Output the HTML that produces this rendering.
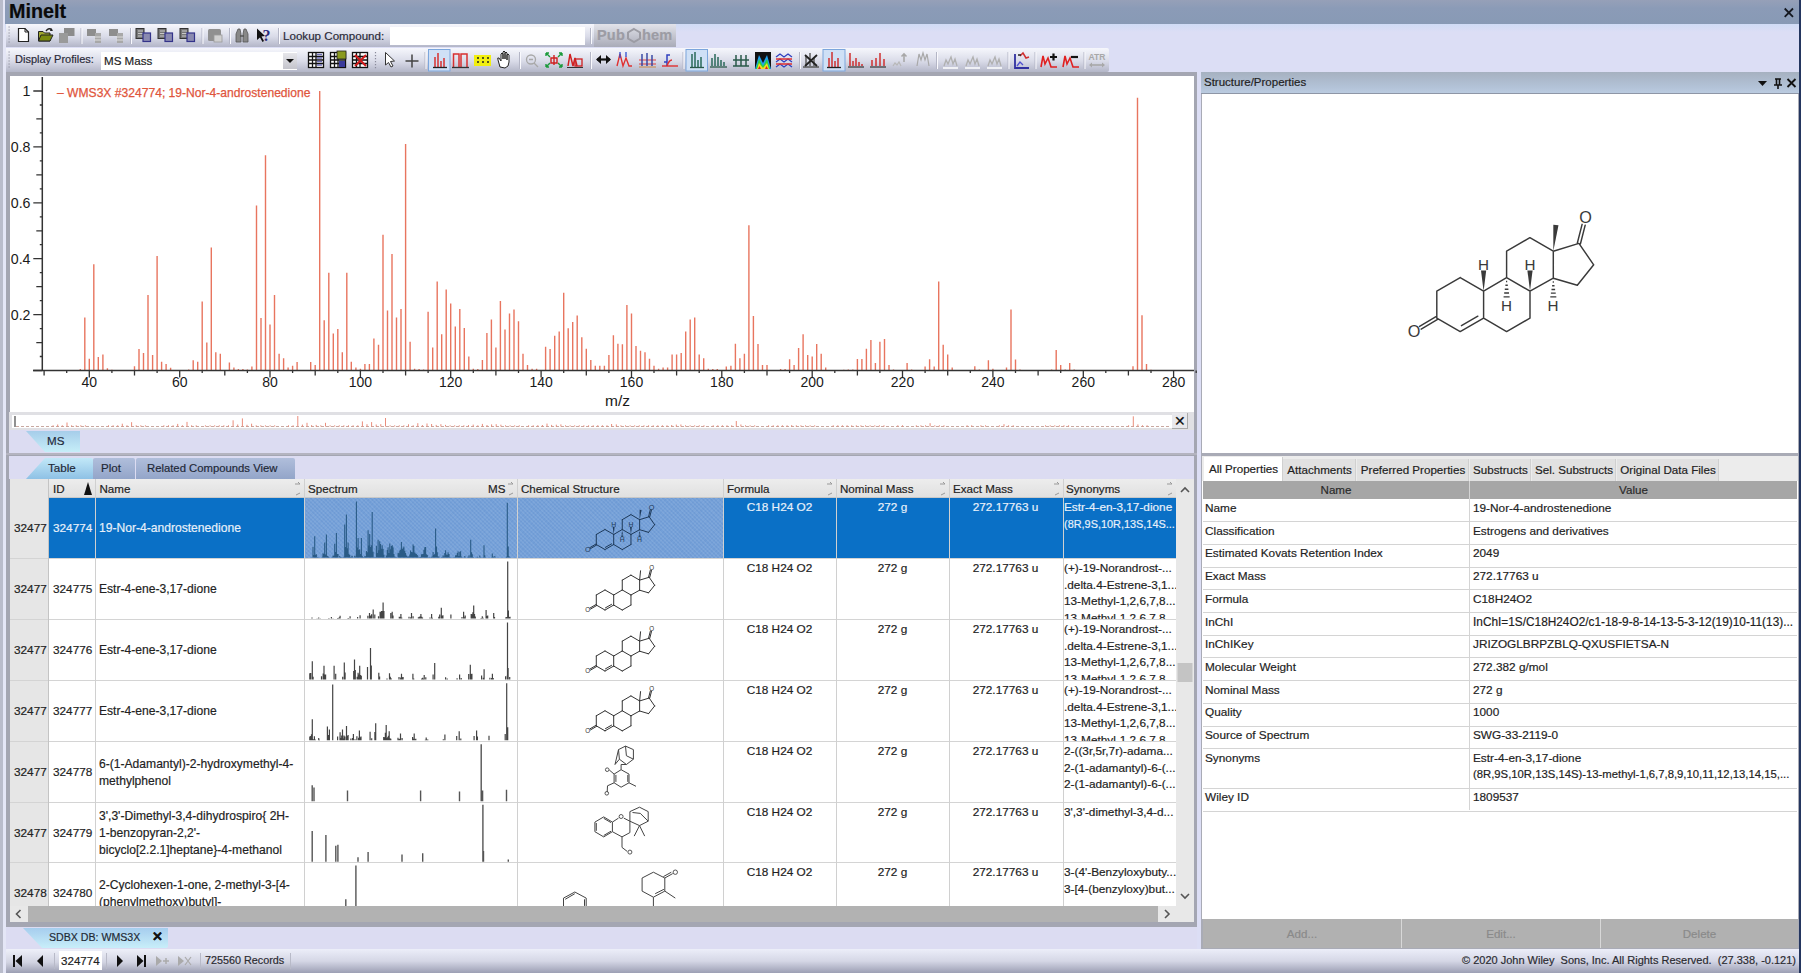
<!DOCTYPE html><html><head><meta charset="utf-8"><title>MineIt</title><style>
*{margin:0;padding:0;box-sizing:border-box}
html,body{width:1801px;height:973px;overflow:hidden}
body{position:relative;background:#dcdef5;font-family:"Liberation Sans",sans-serif;font-size:12px;color:#222}
.a{position:absolute}
.t{position:absolute;white-space:nowrap;line-height:1;-webkit-text-stroke:0.18px currentColor}
</style></head><body>
<div class="a" style="left:0;top:0;width:3px;height:973px;background:#b9bccb"></div>
<div class="a" style="left:3px;top:0;width:3px;height:973px;background:#e4e6f6"></div><div class="a" style="left:5px;top:24px;width:1796px;height:8px;background:linear-gradient(#d0dcf6,#dcdef5)"></div>
<div class="a" style="left:5px;top:0;width:1796px;height:24px;background:linear-gradient(#96a0b8,#8b9bb7 35%,#889ab5)"></div>
<div class="t" style="left:9px;top:2px;font-size:19.8px;font-weight:bold;color:#0a0a0a">MineIt</div>
<svg class="a" style="left:1780px;top:4px" width="18" height="18"><path d="M4.7 4.5L13 12.8M13 4.5L4.7 12.8" stroke="#151820" stroke-width="1.8"/></svg>
<div class="a" style="left:1799px;top:0px;width:2px;height:973px;background:#24365f"></div>
<div class="a" style="left:6px;top:24px;width:670px;height:23px;background:linear-gradient(#f6f7fc,#d9dbe8 55%,#b3b6c8);border-radius:0 2px 2px 0"></div>
<div class="a" style="left:6px;top:48px;width:1103px;height:24px;background:linear-gradient(#f6f7fc,#d9dbe8 55%,#b3b6c8);border-radius:0 2px 2px 0"></div>
<div class="t" style="left:283px;top:30px;font-size:11.6px;color:#2a2a38">Lookup Compound:</div>
<div class="a" style="left:390px;top:27px;width:195px;height:18px;background:#fff"></div>
<div class="a" style="left:594px;top:24px;width:82px;height:23px;background:linear-gradient(#e2e3ea,#a9abb8)"></div>
<div class="t" style="left:597px;top:28px;font-size:14.5px;font-weight:bold;color:#9c9ca4;letter-spacing:0.2px">Pub&#160;&#160;&#160;&#160;hem</div><svg class="a" style="left:626px;top:27px" width="16" height="17"><path d="M8 2L14 5.5V11.5L8 15L2 11.5V5.5Z" fill="none" stroke="#9c9ca4" stroke-width="2"/></svg>
<div class="t" style="left:15px;top:54px;font-size:11px;color:#2a2a38">Display Profiles:</div>
<div class="a" style="left:101px;top:52px;width:196px;height:18px;background:#fff"></div>
<div class="t" style="left:104px;top:55px;font-size:11.6px;color:#222">MS Mass</div>
<div class="a" style="left:283px;top:53px;width:14px;height:16px;background:linear-gradient(#e6e6ea,#c4c4cc)"></div>
<div class="a" style="left:286px;top:59px;width:0;height:0;border-left:4px solid transparent;border-right:4px solid transparent;border-top:4px solid #111"></div>
<div class="a" style="left:6px;top:72px;width:1191px;height:359px;background:#a4a6b2"></div>
<div class="a" style="left:10px;top:76px;width:1184px;height:336px;background:#fff"></div>
<div class="a" style="left:9px;top:412px;width:1185px;height:18px;background:#e0e0e4"></div>
<div class="a" style="left:12px;top:415px;width:1160px;height:13px;background:#fff"></div>
<svg class="a" style="left:0;top:0" width="1200" height="440"><path d="M80.3 370.5V369.1M84.8 370.5V317.4M89.3 370.5V358.8M93.8 370.5V264.3M98.3 370.5V357.1M102.9 370.5V354.6M107.4 370.5V368.3M111.9 370.5V369.7M134.5 370.5V366.3M139.0 370.5V349.0M143.5 370.5V352.9M148.0 370.5V295.0M152.6 370.5V355.1M157.1 370.5V255.9M161.6 370.5V361.8M166.1 370.5V364.1M170.6 370.5V367.7M188.7 370.5V369.4M193.2 370.5V360.2M197.7 370.5V361.8M202.2 370.5V301.5M206.8 370.5V342.6M211.3 370.5V247.5M215.8 370.5V352.3M220.3 370.5V353.7M229.4 370.5V362.4M233.9 370.5V367.4M238.4 370.5V369.1M242.9 370.5V369.1M247.4 370.5V369.4M251.9 370.5V366.6M256.5 370.5V205.6M261.0 370.5V318.0M265.5 370.5V155.3M270.0 370.5V324.4M274.5 370.5V295.0M279.1 370.5V353.7M283.6 370.5V358.2M288.1 370.5V367.4M292.6 370.5V365.7M297.1 370.5V362.1M310.7 370.5V362.1M315.2 370.5V364.9M319.7 370.5V91.0M324.2 370.5V320.2M328.8 370.5V272.7M333.3 370.5V333.6M337.8 370.5V328.9M342.3 370.5V352.3M346.8 370.5V272.7M351.3 370.5V361.8M355.9 370.5V367.4M360.4 370.5V368.8M364.9 370.5V364.1M369.4 370.5V364.1M373.9 370.5V338.4M378.5 370.5V344.8M383.0 370.5V234.7M387.5 370.5V310.4M392.0 370.5V253.9M396.5 370.5V317.4M401.0 370.5V309.0M405.6 370.5V144.1M410.1 370.5V341.7M414.6 370.5V368.8M419.1 370.5V369.1M423.6 370.5V369.4M428.1 370.5V311.8M432.7 370.5V347.6M437.2 370.5V281.6M441.7 370.5V334.2M446.2 370.5V289.4M450.7 370.5V303.4M455.3 370.5V326.6M459.8 370.5V309.0M464.3 370.5V328.0M468.8 370.5V356.5M473.3 370.5V368.8M477.8 370.5V369.1M482.4 370.5V359.9M486.9 370.5V333.0M491.4 370.5V319.4M495.9 370.5V347.6M500.4 370.5V300.9M505.0 370.5V329.4M509.5 370.5V313.5M514.0 370.5V309.6M518.5 370.5V321.3M523.0 370.5V353.7M527.5 370.5V364.9M532.1 370.5V368.8M536.6 370.5V368.8M545.6 370.5V346.7M550.1 370.5V349.0M554.7 370.5V335.8M559.2 370.5V331.4M563.7 370.5V292.8M568.2 370.5V328.3M572.7 370.5V321.9M577.2 370.5V315.4M581.8 370.5V337.2M586.3 370.5V348.7M590.8 370.5V359.9M595.3 370.5V365.7M599.8 370.5V365.7M604.4 370.5V365.7M608.9 370.5V355.1M613.4 370.5V335.3M617.9 370.5V343.7M622.4 370.5V344.2M626.9 370.5V305.1M631.5 370.5V313.5M636.0 370.5V345.9M640.5 370.5V350.7M645.0 370.5V352.3M649.5 370.5V358.8M654.0 370.5V365.7M658.6 370.5V368.8M663.1 370.5V367.4M667.6 370.5V367.4M672.1 370.5V354.6M676.6 370.5V354.6M681.2 370.5V352.9M685.7 370.5V331.4M690.2 370.5V319.4M694.7 370.5V317.4M699.2 370.5V354.6M703.7 370.5V358.2M708.3 370.5V368.8M712.8 370.5V369.1M717.3 370.5V369.1M726.3 370.5V366.6M730.9 370.5V365.7M735.4 370.5V343.7M739.9 370.5V358.2M744.4 370.5V353.7M748.9 370.5V225.2M753.4 370.5V316.0M758.0 370.5V343.9M762.5 370.5V364.9M767.0 370.5V364.9M780.6 370.5V369.1M785.1 370.5V369.1M789.6 370.5V359.3M794.1 370.5V364.9M798.6 370.5V348.1M803.1 370.5V334.2M807.7 370.5V355.1M812.2 370.5V356.5M816.7 370.5V343.9M821.2 370.5V353.7M825.7 370.5V367.4M843.8 370.5V369.7M848.3 370.5V369.4M852.8 370.5V369.4M857.4 370.5V359.0M861.9 370.5V359.0M866.4 370.5V348.7M870.9 370.5V340.0M875.4 370.5V363.0M879.9 370.5V341.7M884.5 370.5V338.9M889.0 370.5V364.9M893.5 370.5V369.4M907.1 370.5V363.0M911.6 370.5V369.4M925.1 370.5V366.6M929.6 370.5V359.3M934.2 370.5V366.6M938.7 370.5V281.6M943.2 370.5V344.8M947.7 370.5V354.6M952.2 370.5V367.4M974.8 370.5V366.3M979.3 370.5V369.4M988.4 370.5V360.2M992.9 370.5V368.8M1006.5 370.5V367.4M1011.0 370.5V309.6M1015.5 370.5V359.6M1020.0 370.5V369.4M1051.6 370.5V369.4M1056.2 370.5V350.1M1060.7 370.5V364.9M1065.2 370.5V369.4M1069.7 370.5V363.0M1074.2 370.5V369.4M1133.0 370.5V366.3M1137.5 370.5V97.7M1142.0 370.5V315.2M1146.5 370.5V364.1M1151.0 370.5V369.7" stroke="#e8755f" stroke-width="1.4" fill="none"/><path d="M42.3 77V370.5M33 370.5H1194" stroke="#333" stroke-width="1.5" fill="none"/><path d="M33.3 370.5H42.3M39.8 356.5H42.3M36.3 342.6H42.3M39.8 328.6H42.3M33.3 314.6H42.3M39.8 300.6H42.3M36.3 286.6H42.3M39.8 272.7H42.3M33.3 258.7H42.3M39.8 244.7H42.3M36.3 230.8H42.3M39.8 216.8H42.3M33.3 202.8H42.3M39.8 188.8H42.3M36.3 174.8H42.3M39.8 160.9H42.3M33.3 146.9H42.3M39.8 132.9H42.3M36.3 118.9H42.3M39.8 105.0H42.3M33.3 91.0H42.3M44.1 370.5V375.5M66.7 370.5V373.0M89.3 370.5V377.5M111.9 370.5V373.0M134.5 370.5V375.5M157.1 370.5V373.0M179.7 370.5V377.5M202.2 370.5V373.0M224.8 370.5V375.5M247.4 370.5V373.0M270.0 370.5V377.5M292.6 370.5V373.0M315.2 370.5V375.5M337.8 370.5V373.0M360.4 370.5V377.5M383.0 370.5V373.0M405.6 370.5V375.5M428.1 370.5V373.0M450.7 370.5V377.5M473.3 370.5V373.0M495.9 370.5V375.5M518.5 370.5V373.0M541.1 370.5V377.5M563.7 370.5V373.0M586.3 370.5V375.5M608.9 370.5V373.0M631.5 370.5V377.5M654.0 370.5V373.0M676.6 370.5V375.5M699.2 370.5V373.0M721.8 370.5V377.5M744.4 370.5V373.0M767.0 370.5V375.5M789.6 370.5V373.0M812.2 370.5V377.5M834.8 370.5V373.0M857.4 370.5V375.5M879.9 370.5V373.0M902.5 370.5V377.5M925.1 370.5V373.0M947.7 370.5V375.5M970.3 370.5V373.0M992.9 370.5V377.5M1015.5 370.5V373.0M1038.1 370.5V375.5M1060.7 370.5V373.0M1083.3 370.5V377.5M1105.8 370.5V373.0M1128.4 370.5V375.5M1151.0 370.5V373.0M1173.6 370.5V377.5M1196.2 370.5V373.0" stroke="#333" stroke-width="1.3" fill="none"/><text x="30.5" y="96.2" text-anchor="end" font-size="14.2" fill="#1a1a1a" font-family="Liberation Sans">1</text><text x="30.5" y="152.1" text-anchor="end" font-size="14.2" fill="#1a1a1a" font-family="Liberation Sans">0.8</text><text x="30.5" y="208.0" text-anchor="end" font-size="14.2" fill="#1a1a1a" font-family="Liberation Sans">0.6</text><text x="30.5" y="263.9" text-anchor="end" font-size="14.2" fill="#1a1a1a" font-family="Liberation Sans">0.4</text><text x="30.5" y="319.8" text-anchor="end" font-size="14.2" fill="#1a1a1a" font-family="Liberation Sans">0.2</text><text x="89.3" y="387.3" text-anchor="middle" font-size="14" fill="#1a1a1a" font-family="Liberation Sans">40</text><text x="179.7" y="387.3" text-anchor="middle" font-size="14" fill="#1a1a1a" font-family="Liberation Sans">60</text><text x="270.0" y="387.3" text-anchor="middle" font-size="14" fill="#1a1a1a" font-family="Liberation Sans">80</text><text x="360.4" y="387.3" text-anchor="middle" font-size="14" fill="#1a1a1a" font-family="Liberation Sans">100</text><text x="450.7" y="387.3" text-anchor="middle" font-size="14" fill="#1a1a1a" font-family="Liberation Sans">120</text><text x="541.1" y="387.3" text-anchor="middle" font-size="14" fill="#1a1a1a" font-family="Liberation Sans">140</text><text x="631.5" y="387.3" text-anchor="middle" font-size="14" fill="#1a1a1a" font-family="Liberation Sans">160</text><text x="721.8" y="387.3" text-anchor="middle" font-size="14" fill="#1a1a1a" font-family="Liberation Sans">180</text><text x="812.2" y="387.3" text-anchor="middle" font-size="14" fill="#1a1a1a" font-family="Liberation Sans">200</text><text x="902.5" y="387.3" text-anchor="middle" font-size="14" fill="#1a1a1a" font-family="Liberation Sans">220</text><text x="992.9" y="387.3" text-anchor="middle" font-size="14" fill="#1a1a1a" font-family="Liberation Sans">240</text><text x="1083.3" y="387.3" text-anchor="middle" font-size="14" fill="#1a1a1a" font-family="Liberation Sans">260</text><text x="1173.6" y="387.3" text-anchor="middle" font-size="14" fill="#1a1a1a" font-family="Liberation Sans">280</text><text x="617.5" y="405.5" text-anchor="middle" font-size="15.5" fill="#1a1a1a" font-family="Liberation Sans">m/z</text><text x="57" y="97" font-size="12.1" fill="#e0553c" stroke="#e0553c" stroke-width="0.25" font-family="Liberation Sans">– WMS3X #324774; 19-Nor-4-androstenedione</text><path d="M16 426.5H1170" stroke="#c8a8a0" stroke-width="1" stroke-dasharray="3 2" fill="none"/><path d="M15 416V427" stroke="#555" stroke-width="1.3"/><path d="M53.1 426.5V425.3M57.7 426.5V424.5M62.3 426.5V425.3M67.0 426.5V422.5M71.6 426.5V425.3M76.2 426.5V425.3M80.8 426.5V425.3M85.4 426.5V425.3M108.5 426.5V425.3M113.1 426.5V425.3M117.7 426.5V425.3M122.3 426.5V423.7M127.0 426.5V425.3M131.6 426.5V422.2M136.2 426.5V425.3M140.8 426.5V425.3M145.4 426.5V425.3M163.9 426.5V425.3M168.5 426.5V425.3M173.1 426.5V425.3M177.7 426.5V423.9M182.4 426.5V425.3M187.0 426.5V421.9M191.6 426.5V425.3M196.2 426.5V425.3M205.4 426.5V425.3M210.1 426.5V425.3M214.7 426.5V425.3M219.3 426.5V425.3M223.9 426.5V425.3M228.5 426.5V425.3M233.1 426.5V420.3M237.7 426.5V424.5M242.4 426.5V418.4M247.0 426.5V424.8M251.6 426.5V423.7M256.2 426.5V425.3M260.8 426.5V425.3M265.4 426.5V425.3M270.1 426.5V425.3M274.7 426.5V425.3M288.5 426.5V425.3M293.1 426.5V425.3M297.8 426.5V416.0M302.4 426.5V424.6M307.0 426.5V422.8M311.6 426.5V425.1M316.2 426.5V424.9M320.8 426.5V425.3M325.5 426.5V422.8M330.1 426.5V425.3M334.7 426.5V425.3M339.3 426.5V425.3M343.9 426.5V425.3M348.5 426.5V425.3M353.1 426.5V425.3M357.8 426.5V425.3M362.4 426.5V421.4M367.0 426.5V424.2M371.6 426.5V422.1M376.2 426.5V424.5M380.8 426.5V424.2M385.5 426.5V418.0M390.1 426.5V425.3M394.7 426.5V425.3M399.3 426.5V425.3M403.9 426.5V425.3M408.5 426.5V424.3M413.2 426.5V425.3M417.8 426.5V423.2M422.4 426.5V425.1M427.0 426.5V423.5M431.6 426.5V424.0M436.2 426.5V424.9M440.9 426.5V424.2M445.5 426.5V424.9M450.1 426.5V425.3M454.7 426.5V425.3M459.3 426.5V425.3M463.9 426.5V425.3M468.5 426.5V425.1M473.2 426.5V424.6M477.8 426.5V425.3M482.4 426.5V423.9M487.0 426.5V425.0M491.6 426.5V424.4M496.2 426.5V424.2M500.9 426.5V424.7M505.5 426.5V425.3M510.1 426.5V425.3M514.7 426.5V425.3M519.3 426.5V425.3M528.6 426.5V425.3M533.2 426.5V425.3M537.8 426.5V425.2M542.4 426.5V425.0M547.0 426.5V423.6M551.6 426.5V424.9M556.3 426.5V424.7M560.9 426.5V424.4M565.5 426.5V425.3M570.1 426.5V425.3M574.7 426.5V425.3M579.3 426.5V425.3M583.9 426.5V425.3M588.6 426.5V425.3M593.2 426.5V425.3M597.8 426.5V425.2M602.4 426.5V425.3M607.0 426.5V425.3M611.6 426.5V424.0M616.3 426.5V424.4M620.9 426.5V425.3M625.5 426.5V425.3M630.1 426.5V425.3M634.7 426.5V425.3M639.3 426.5V425.3M644.0 426.5V425.3M648.6 426.5V425.3M653.2 426.5V425.3M657.8 426.5V425.3M662.4 426.5V425.3M667.0 426.5V425.3M671.7 426.5V425.0M676.3 426.5V424.6M680.9 426.5V424.5M685.5 426.5V425.3M690.1 426.5V425.3M694.7 426.5V425.3M699.3 426.5V425.3M704.0 426.5V425.3M713.2 426.5V425.3M717.8 426.5V425.3M722.4 426.5V425.3M727.0 426.5V425.3M731.7 426.5V425.3M736.3 426.5V421.0M740.9 426.5V424.5M745.5 426.5V425.3M750.1 426.5V425.3M754.7 426.5V425.3M768.6 426.5V425.3M773.2 426.5V425.3M777.8 426.5V425.3M782.4 426.5V425.3M787.1 426.5V425.3M791.7 426.5V425.1M796.3 426.5V425.3M800.9 426.5V425.3M805.5 426.5V425.3M810.1 426.5V425.3M814.7 426.5V425.3M833.2 426.5V425.3M837.8 426.5V425.3M842.4 426.5V425.3M847.1 426.5V425.3M851.7 426.5V425.3M856.3 426.5V425.3M860.9 426.5V425.3M865.5 426.5V425.3M870.1 426.5V425.3M874.8 426.5V425.3M879.4 426.5V425.3M884.0 426.5V425.3M897.8 426.5V425.3M902.5 426.5V425.3M916.3 426.5V425.3M920.9 426.5V425.3M925.5 426.5V425.3M930.1 426.5V423.2M934.8 426.5V425.3M939.4 426.5V425.3M944.0 426.5V425.3M967.1 426.5V425.3M971.7 426.5V425.3M980.9 426.5V425.3M985.5 426.5V425.3M999.4 426.5V425.3M1004.0 426.5V424.2M1008.6 426.5V425.3M1013.2 426.5V425.3M1045.5 426.5V425.3M1050.2 426.5V425.3M1054.8 426.5V425.3M1059.4 426.5V425.3M1064.0 426.5V425.3M1068.6 426.5V425.3M1128.6 426.5V425.3M1133.3 426.5V416.3M1137.9 426.5V424.4M1142.5 426.5V425.3M1147.1 426.5V425.3" stroke="#e8806c" stroke-width="0.9" fill="none"/></svg>
<div class="a" style="left:1172px;top:413px;width:16px;height:16px;background:#e8e8ec;border-right:1px solid #aaa;border-bottom:1px solid #aaa"></div>
<div class="t" style="left:1174px;top:414px;font-size:14px;color:#111">&#x2715;</div>
<div class="a" style="left:6px;top:430px;width:1191px;height:24px;background:#dcdcf2;border-left:3px solid #a4a6b2;border-right:3px solid #a4a6b2"></div>
<div class="a" style="left:26px;top:431px;width:54px;height:21px;background:linear-gradient(#a6cdea,#c6eef8);clip-path:polygon(0 0,100% 0,100% 100%,19px 100%)"></div>
<div class="t" style="left:47px;top:435px;font-size:11.6px;color:#1e2a3a">MS</div>
<div class="a" style="left:6px;top:453px;width:1191px;height:2px;background:#b4b4c0"></div>
<div class="a" style="left:6px;top:455px;width:1191px;height:472px;background:#a4a6b2"></div>
<div class="a" style="left:9px;top:456px;width:1185px;height:23px;background:#dcdcf2"></div>
<div class="a" style="left:26px;top:458px;width:67px;height:21px;background:linear-gradient(#c2e8f8,#8ec1e5);clip-path:polygon(19px 0,100% 0,100% 100%,0 100%);border-radius:2px 2px 0 0"></div>
<div class="a" style="left:93px;top:458px;width:42px;height:21px;background:linear-gradient(#b0bedb,#93a5c9);border-radius:2px 2px 0 0"></div>
<div class="a" style="left:136px;top:458px;width:159px;height:21px;background:linear-gradient(#b0bedb,#93a5c9);border-radius:2px 2px 0 0"></div>
<div class="t" style="left:48px;top:462px;font-size:11.6px;color:#1e2836">Table</div>
<div class="t" style="left:101px;top:462px;font-size:11.6px;color:#1e2836">Plot</div>
<div class="t" style="left:147px;top:462.5px;font-size:11.3px;color:#1e2836">Related Compounds View</div>
<div class="a" style="left:10px;top:479px;width:1184px;height:443px;background:#fff"></div>
<div class="a" style="left:10px;top:479px;width:1166px;height:19px;background:linear-gradient(#ededed,#e0e0e0);border-bottom:1px solid #c8c8c8"></div>
<div class="t" style="left:53px;top:483px;font-size:11.6px;color:#222">ID</div>
<div class="t" style="left:99.5px;top:483px;font-size:11.6px;color:#222">Name</div>
<div class="t" style="left:308px;top:483px;font-size:11.6px;color:#222">Spectrum</div>
<div class="t" style="left:521px;top:483px;font-size:11.6px;color:#222">Chemical Structure</div>
<div class="t" style="left:727px;top:483px;font-size:11.6px;color:#222">Formula</div>
<div class="t" style="left:840px;top:483px;font-size:11.6px;color:#222">Nominal Mass</div>
<div class="t" style="left:953px;top:483px;font-size:11.6px;color:#222">Exact Mass</div>
<div class="t" style="left:1066px;top:483px;font-size:11.6px;color:#222">Synonyms</div>
<div class="t" style="left:488px;top:483px;font-size:11.6px;color:#222">MS</div>
<div class="a" style="left:84px;top:482px;width:0;height:0;border-left:4px solid transparent;border-right:4px solid transparent;border-bottom:13px solid #111"></div>
<svg class="a" style="left:294px;top:481px" width="8" height="15"><path d="M1 3H6L4 1M6 12L2 14" stroke="#999" stroke-width="1" fill="none"/></svg>
<svg class="a" style="left:507px;top:481px" width="8" height="15"><path d="M1 3H6L4 1M6 12L2 14" stroke="#999" stroke-width="1" fill="none"/></svg>
<svg class="a" style="left:826px;top:481px" width="8" height="15"><path d="M1 3H6L4 1M6 12L2 14" stroke="#999" stroke-width="1" fill="none"/></svg>
<svg class="a" style="left:939px;top:481px" width="8" height="15"><path d="M1 3H6L4 1M6 12L2 14" stroke="#999" stroke-width="1" fill="none"/></svg>
<svg class="a" style="left:1053px;top:481px" width="8" height="15"><path d="M1 3H6L4 1M6 12L2 14" stroke="#999" stroke-width="1" fill="none"/></svg>
<svg class="a" style="left:1166px;top:481px" width="8" height="15"><path d="M1 3H6L4 1M6 12L2 14" stroke="#999" stroke-width="1" fill="none"/></svg>
<div class="a" style="left:10px;top:479px;width:38px;height:428px;background:#e6e6e6"></div>
<div class="a" style="left:48px;top:498px;width:256px;height:60px;background:#0a70c6"></div>
<div class="a" style="left:517px;top:498px;width:0px;height:60px;"></div>
<div class="a" style="left:723px;top:498px;width:453px;height:60px;background:#0a70c6"></div>
<div class="a" style="left:304px;top:498px;width:419px;height:60px;background-color:#74a0d8;background-image:repeating-linear-gradient(45deg,rgba(255,255,255,0.07) 0 1.5px,transparent 1.5px 3px),repeating-linear-gradient(-45deg,rgba(40,80,160,0.06) 0 1.5px,transparent 1.5px 3px)"></div>
<div class="a" style="left:10px;top:558px;width:1166px;height:1px;background:#d4d4d4"></div><div class="a" style="left:10px;top:619px;width:1166px;height:1px;background:#d4d4d4"></div><div class="a" style="left:10px;top:680px;width:1166px;height:1px;background:#d4d4d4"></div><div class="a" style="left:10px;top:741px;width:1166px;height:1px;background:#d4d4d4"></div><div class="a" style="left:10px;top:802px;width:1166px;height:1px;background:#d4d4d4"></div><div class="a" style="left:10px;top:862px;width:1166px;height:1px;background:#d4d4d4"></div>
<div class="a" style="left:48px;top:479px;width:1px;height:428px;background:#d0d0d0"></div>
<div class="a" style="left:95px;top:479px;width:1px;height:428px;background:#d0d0d0"></div>
<div class="a" style="left:304px;top:479px;width:1px;height:428px;background:#d0d0d0"></div>
<div class="a" style="left:517px;top:479px;width:1px;height:428px;background:#d0d0d0"></div>
<div class="a" style="left:723px;top:479px;width:1px;height:428px;background:#d0d0d0"></div>
<div class="a" style="left:836px;top:479px;width:1px;height:428px;background:#d0d0d0"></div>
<div class="a" style="left:949px;top:479px;width:1px;height:428px;background:#d0d0d0"></div>
<div class="a" style="left:1063px;top:479px;width:1px;height:428px;background:#d0d0d0"></div>
<div class="a" style="left:48px;top:479px;width:1px;height:428px;background:#c4c4c4"></div>
<div class="a" style="left:10px;top:498px;width:1166px;height:60px;overflow:hidden">
<div class="t" style="left:4px;top:25px;font-size:11.8px;color:#222;width:34px;overflow:hidden">32477</div>
<div class="t" style="left:43px;top:25px;font-size:11.8px;color:#e8f0fa">324774</div>
<div class="t" style="left:89px;top:24.0px;font-size:12.1px;color:#e8f0fa">19-Nor-4-androstenedione</div>
<div class="t" style="left:713px;top:4px;font-size:11.8px;color:#e8f0fa;width:113px;text-align:center">C18 H24 O2</div>
<div class="t" style="left:826px;top:4px;font-size:11.8px;color:#e8f0fa;width:113px;text-align:center">272 g</div>
<div class="t" style="left:939px;top:4px;font-size:11.8px;color:#e8f0fa;width:113px;text-align:center">272.17763 u</div>
<div class="t" style="left:1054px;top:4.0px;font-size:11.8px;color:#e8f0fa;width:112px;overflow:hidden">Estr-4-en-3,17-dione</div>
<div class="t" style="left:1054px;top:20.7px;font-size:10.9px;color:#e8f0fa;width:112px;overflow:hidden">(8R,9S,10R,13S,14S...</div>
</div>
<div class="a" style="left:10px;top:559px;width:1166px;height:60px;overflow:hidden">
<div class="t" style="left:4px;top:25px;font-size:11.8px;color:#222;width:34px;overflow:hidden">32477</div>
<div class="t" style="left:43px;top:25px;font-size:11.8px;color:#222">324775</div>
<div class="t" style="left:89px;top:24.0px;font-size:12.1px;color:#222">Estr-4-ene-3,17-dione</div>
<div class="t" style="left:713px;top:4px;font-size:11.8px;color:#222;width:113px;text-align:center">C18 H24 O2</div>
<div class="t" style="left:826px;top:4px;font-size:11.8px;color:#222;width:113px;text-align:center">272 g</div>
<div class="t" style="left:939px;top:4px;font-size:11.8px;color:#222;width:113px;text-align:center">272.17763 u</div>
<div class="t" style="left:1054px;top:4.0px;font-size:11.8px;color:#222;width:112px;overflow:hidden">(+)-19-Norandrost-...</div>
<div class="t" style="left:1054px;top:20.7px;font-size:11.8px;color:#222;width:112px;overflow:hidden">.delta.4-Estrene-3,1...</div>
<div class="t" style="left:1054px;top:37.4px;font-size:11.8px;color:#222;width:112px;overflow:hidden">13-Methyl-1,2,6,7,8...</div>
<div class="t" style="left:1054px;top:54.1px;font-size:11.8px;color:#222;width:112px;overflow:hidden">13-Methyl-1,2,6,7,8...</div>
</div>
<div class="a" style="left:10px;top:620px;width:1166px;height:60px;overflow:hidden">
<div class="t" style="left:4px;top:25px;font-size:11.8px;color:#222;width:34px;overflow:hidden">32477</div>
<div class="t" style="left:43px;top:25px;font-size:11.8px;color:#222">324776</div>
<div class="t" style="left:89px;top:24.0px;font-size:12.1px;color:#222">Estr-4-ene-3,17-dione</div>
<div class="t" style="left:713px;top:4px;font-size:11.8px;color:#222;width:113px;text-align:center">C18 H24 O2</div>
<div class="t" style="left:826px;top:4px;font-size:11.8px;color:#222;width:113px;text-align:center">272 g</div>
<div class="t" style="left:939px;top:4px;font-size:11.8px;color:#222;width:113px;text-align:center">272.17763 u</div>
<div class="t" style="left:1054px;top:4.0px;font-size:11.8px;color:#222;width:112px;overflow:hidden">(+)-19-Norandrost-...</div>
<div class="t" style="left:1054px;top:20.7px;font-size:11.8px;color:#222;width:112px;overflow:hidden">.delta.4-Estrene-3,1...</div>
<div class="t" style="left:1054px;top:37.4px;font-size:11.8px;color:#222;width:112px;overflow:hidden">13-Methyl-1,2,6,7,8...</div>
<div class="t" style="left:1054px;top:54.1px;font-size:11.8px;color:#222;width:112px;overflow:hidden">13-Methyl-1,2,6,7,8...</div>
</div>
<div class="a" style="left:10px;top:681px;width:1166px;height:60px;overflow:hidden">
<div class="t" style="left:4px;top:25px;font-size:11.8px;color:#222;width:34px;overflow:hidden">32477</div>
<div class="t" style="left:43px;top:25px;font-size:11.8px;color:#222">324777</div>
<div class="t" style="left:89px;top:24.0px;font-size:12.1px;color:#222">Estr-4-ene-3,17-dione</div>
<div class="t" style="left:713px;top:4px;font-size:11.8px;color:#222;width:113px;text-align:center">C18 H24 O2</div>
<div class="t" style="left:826px;top:4px;font-size:11.8px;color:#222;width:113px;text-align:center">272 g</div>
<div class="t" style="left:939px;top:4px;font-size:11.8px;color:#222;width:113px;text-align:center">272.17763 u</div>
<div class="t" style="left:1054px;top:4.0px;font-size:11.8px;color:#222;width:112px;overflow:hidden">(+)-19-Norandrost-...</div>
<div class="t" style="left:1054px;top:20.7px;font-size:11.8px;color:#222;width:112px;overflow:hidden">.delta.4-Estrene-3,1...</div>
<div class="t" style="left:1054px;top:37.4px;font-size:11.8px;color:#222;width:112px;overflow:hidden">13-Methyl-1,2,6,7,8...</div>
<div class="t" style="left:1054px;top:54.1px;font-size:11.8px;color:#222;width:112px;overflow:hidden">13-Methyl-1,2,6,7,8...</div>
</div>
<div class="a" style="left:10px;top:742px;width:1166px;height:60px;overflow:hidden">
<div class="t" style="left:4px;top:25px;font-size:11.8px;color:#222;width:34px;overflow:hidden">32477</div>
<div class="t" style="left:43px;top:25px;font-size:11.8px;color:#222">324778</div>
<div class="t" style="left:89px;top:15.5px;font-size:12.1px;color:#222">6-(1-Adamantyl)-2-hydroxymethyl-4-</div>
<div class="t" style="left:89px;top:32.5px;font-size:12.1px;color:#222">methylphenol</div>
<div class="t" style="left:713px;top:4px;font-size:11.8px;color:#222;width:113px;text-align:center">C18 H24 O2</div>
<div class="t" style="left:826px;top:4px;font-size:11.8px;color:#222;width:113px;text-align:center">272 g</div>
<div class="t" style="left:939px;top:4px;font-size:11.8px;color:#222;width:113px;text-align:center">272.17763 u</div>
<div class="t" style="left:1054px;top:4.0px;font-size:11.8px;color:#222;width:112px;overflow:hidden"> 2-((3r,5r,7r)-adama...</div>
<div class="t" style="left:1054px;top:20.7px;font-size:11.8px;color:#222;width:112px;overflow:hidden">2-(1-adamantyl)-6-(...</div>
<div class="t" style="left:1054px;top:37.4px;font-size:11.8px;color:#222;width:112px;overflow:hidden">2-(1-adamantyl)-6-(...</div>
</div>
<div class="a" style="left:10px;top:803px;width:1166px;height:60px;overflow:hidden">
<div class="t" style="left:4px;top:25px;font-size:11.8px;color:#222;width:34px;overflow:hidden">32477</div>
<div class="t" style="left:43px;top:25px;font-size:11.8px;color:#222">324779</div>
<div class="t" style="left:89px;top:7.0px;font-size:12.1px;color:#222">3',3'-Dimethyl-3,4-dihydrospiro{ 2H-</div>
<div class="t" style="left:89px;top:24.0px;font-size:12.1px;color:#222">1-benzopyran-2,2'-</div>
<div class="t" style="left:89px;top:41.0px;font-size:12.1px;color:#222">bicyclo[2.2.1]heptane}-4-methanol</div>
<div class="t" style="left:713px;top:4px;font-size:11.8px;color:#222;width:113px;text-align:center">C18 H24 O2</div>
<div class="t" style="left:826px;top:4px;font-size:11.8px;color:#222;width:113px;text-align:center">272 g</div>
<div class="t" style="left:939px;top:4px;font-size:11.8px;color:#222;width:113px;text-align:center">272.17763 u</div>
<div class="t" style="left:1054px;top:4.0px;font-size:11.8px;color:#222;width:112px;overflow:hidden">3',3'-dimethyl-3,4-d...</div>
</div>
<div class="a" style="left:10px;top:863px;width:1166px;height:43px;overflow:hidden">
<div class="t" style="left:4px;top:25px;font-size:11.8px;color:#222;width:34px;overflow:hidden">32478</div>
<div class="t" style="left:43px;top:25px;font-size:11.8px;color:#222">324780</div>
<div class="t" style="left:89px;top:15.5px;font-size:12.1px;color:#222">2-Cyclohexen-1-one, 2-methyl-3-[4-</div>
<div class="t" style="left:89px;top:32.5px;font-size:12.1px;color:#222">(phenylmethoxy)butyl]-</div>
<div class="t" style="left:713px;top:4px;font-size:11.8px;color:#222;width:113px;text-align:center">C18 H24 O2</div>
<div class="t" style="left:826px;top:4px;font-size:11.8px;color:#222;width:113px;text-align:center">272 g</div>
<div class="t" style="left:939px;top:4px;font-size:11.8px;color:#222;width:113px;text-align:center">272.17763 u</div>
<div class="t" style="left:1054px;top:4.0px;font-size:11.8px;color:#222;width:112px;overflow:hidden">3-(4'-Benzyloxybuty...</div>
<div class="t" style="left:1054px;top:20.7px;font-size:11.8px;color:#222;width:112px;overflow:hidden">3-[4-(benzyloxy)but...</div>
</div>
<svg class="a" style="left:0;top:0" width="1200" height="910"><defs><clipPath id="gc"><rect x="304" y="498" width="419" height="408"/></clipPath></defs><g clip-path="url(#gc)"><path d="M312.2 557.5V557.2M313.0 557.5V546.9M313.9 557.5V555.1M314.7 557.5V536.2M315.5 557.5V554.8M316.4 557.5V554.3M317.2 557.5V557.1M318.0 557.5V557.3M322.2 557.5V556.7M323.0 557.5V553.2M323.9 557.5V554.0M324.7 557.5V542.4M325.5 557.5V554.4M326.4 557.5V534.5M327.2 557.5V555.8M328.0 557.5V556.2M328.9 557.5V556.9M332.2 557.5V557.3M333.0 557.5V555.4M333.9 557.5V555.8M334.7 557.5V543.7M335.5 557.5V551.9M336.4 557.5V532.9M337.2 557.5V553.9M338.0 557.5V554.1M339.7 557.5V555.9M340.5 557.5V556.9M341.4 557.5V557.2M342.2 557.5V557.2M343.1 557.5V557.3M343.9 557.5V556.7M344.7 557.5V524.5M345.6 557.5V547.0M346.4 557.5V514.4M347.2 557.5V548.3M348.1 557.5V542.4M348.9 557.5V554.1M349.7 557.5V555.0M350.6 557.5V556.9M351.4 557.5V556.5M352.2 557.5V555.8M354.7 557.5V555.8M355.6 557.5V556.4M356.4 557.5V501.5M357.2 557.5V547.4M358.1 557.5V537.9M358.9 557.5V550.1M359.7 557.5V549.2M360.6 557.5V553.9M361.4 557.5V537.9M362.2 557.5V555.8M363.1 557.5V556.9M363.9 557.5V557.2M364.7 557.5V556.2M365.6 557.5V556.2M366.4 557.5V551.1M367.2 557.5V552.3M368.1 557.5V530.3M368.9 557.5V545.5M369.7 557.5V534.1M370.6 557.5V546.9M371.4 557.5V545.2M372.2 557.5V512.1M373.1 557.5V551.7M373.9 557.5V557.2M374.7 557.5V557.2M375.6 557.5V557.3M376.4 557.5V545.7M377.2 557.5V552.9M378.1 557.5V539.7M378.9 557.5V550.2M379.7 557.5V541.3M380.6 557.5V544.1M381.4 557.5V548.7M382.2 557.5V545.2M383.1 557.5V549.0M383.9 557.5V554.7M384.8 557.5V557.2M385.6 557.5V557.2M386.4 557.5V555.4M387.3 557.5V550.0M388.1 557.5V547.3M388.9 557.5V552.9M389.8 557.5V543.6M390.6 557.5V549.3M391.4 557.5V546.1M392.3 557.5V545.3M393.1 557.5V547.6M393.9 557.5V554.1M394.8 557.5V556.4M395.6 557.5V557.2M396.4 557.5V557.2M398.1 557.5V552.7M398.9 557.5V553.2M399.8 557.5V550.6M400.6 557.5V549.7M401.4 557.5V541.9M402.3 557.5V549.0M403.1 557.5V547.8M403.9 557.5V546.5M404.8 557.5V550.8M405.6 557.5V553.1M406.4 557.5V555.4M407.3 557.5V556.5M408.1 557.5V556.5M408.9 557.5V556.5M409.8 557.5V554.4M410.6 557.5V550.4M411.4 557.5V552.1M412.3 557.5V552.2M413.1 557.5V544.4M413.9 557.5V546.1M414.8 557.5V552.6M415.6 557.5V553.5M416.4 557.5V553.9M417.3 557.5V555.1M418.1 557.5V556.5M418.9 557.5V557.2M419.8 557.5V556.9M420.6 557.5V556.9M421.4 557.5V554.3M422.3 557.5V554.3M423.1 557.5V554.0M423.9 557.5V549.7M424.8 557.5V547.3M425.6 557.5V546.9M426.4 557.5V554.3M427.3 557.5V555.0M428.1 557.5V557.2M429.0 557.5V557.2M429.8 557.5V557.2M431.5 557.5V556.7M432.3 557.5V556.5M433.1 557.5V552.1M434.0 557.5V555.0M434.8 557.5V554.1M435.6 557.5V528.4M436.5 557.5V546.6M437.3 557.5V552.2M438.1 557.5V556.4M439.0 557.5V556.4M441.5 557.5V557.2M442.3 557.5V557.2M443.1 557.5V555.3M444.0 557.5V556.4M444.8 557.5V553.0M445.6 557.5V550.2M446.5 557.5V554.4M447.3 557.5V554.7M448.1 557.5V552.2M449.0 557.5V554.1M449.8 557.5V556.9M453.1 557.5V557.3M454.0 557.5V557.3M454.8 557.5V557.3M455.6 557.5V555.2M456.5 557.5V555.2M457.3 557.5V553.1M458.1 557.5V551.4M459.0 557.5V556.0M459.8 557.5V551.7M460.6 557.5V551.2M461.5 557.5V556.4M462.3 557.5V557.3M464.8 557.5V556.0M465.6 557.5V557.3M468.1 557.5V556.7M469.0 557.5V555.3M469.8 557.5V556.7M470.7 557.5V539.7M471.5 557.5V552.3M472.3 557.5V554.3M473.2 557.5V556.9M477.3 557.5V556.7M478.2 557.5V557.3M479.8 557.5V555.4M480.7 557.5V557.2M483.2 557.5V556.9M484.0 557.5V545.3M484.8 557.5V555.3M485.7 557.5V557.3M491.5 557.5V557.3M492.3 557.5V553.4M493.2 557.5V556.4M494.0 557.5V557.3M494.8 557.5V556.0M495.7 557.5V557.3M506.5 557.5V556.7M507.3 557.5V502.8M508.2 557.5V546.4M509.0 557.5V556.2M509.9 557.5V557.3" stroke="#2a5b86" stroke-width="1.1" fill="none"/><path d="M312.0 618.6V617.5M311.2 618.6V618.4M318.7 618.6V617.5M317.1 618.6V618.2M320.3 618.6V618.3M331.4 618.6V616.9M328.9 618.6V617.9M333.0 618.6V618.2M340.1 618.6V615.8M337.6 618.6V618.1M338.5 618.6V617.9M339.3 618.6V617.3M350.1 618.6V616.3M347.6 618.6V618.2M348.5 618.6V618.1M360.1 618.6V615.2M357.6 618.6V617.0M369.5 618.6V612.9M367.9 618.6V615.8M370.3 618.6V616.2M373.2 618.6V609.5M370.7 618.6V615.5M371.6 618.6V614.3M374.8 618.6V614.4M380.1 618.6V611.8M378.5 618.6V616.2M381.7 618.6V617.0M383.1 618.6V602.6M380.6 618.6V612.3M381.5 618.6V611.1M382.3 618.6V611.1M383.9 618.6V610.9M390.8 618.6V612.9M392.4 618.6V617.3M392.2 618.6V611.8M393.0 618.6V615.6M400.9 618.6V614.0M399.3 618.6V616.7M400.1 618.6V616.9M401.7 618.6V617.6M411.5 618.6V612.9M409.0 618.6V616.7M410.7 618.6V617.3M413.1 618.6V616.3M420.9 618.6V614.0M418.4 618.6V617.3M419.3 618.6V616.8M420.1 618.6V616.4M421.7 618.6V616.8M422.5 618.6V617.5M431.6 618.6V614.0M430.0 618.6V617.6M432.4 618.6V617.8M441.3 618.6V607.8M438.8 618.6V616.8M439.7 618.6V614.6M442.1 618.6V615.7M442.9 618.6V615.3M450.9 618.6V614.6M463.6 618.6V611.8M462.0 618.6V617.0M464.4 618.6V617.3M465.2 618.6V615.5M473.7 618.6V605.5M471.2 618.6V613.9M472.1 618.6V614.3M472.9 618.6V612.2M474.5 618.6V613.9M475.3 618.6V616.6M482.3 618.6V616.3M480.7 618.6V618.2M481.5 618.6V618.1M483.1 618.6V617.8M486.1 618.6V610.1M486.9 618.6V616.0M487.7 618.6V615.5M493.7 618.6V612.9M494.5 618.6V616.9M507.7 618.6V561.6M508.4 618.6V610.6M505.9 618.6V617.3M506.8 618.6V617.1M509.2 618.6V617.1M510.0 618.6V616.8" stroke="#444" stroke-width="1.2" fill="none"/><path d="M312.3 679.5V661.3M309.8 679.5V673.3M310.7 679.5V672.9M313.1 679.5V676.7M324.0 679.5V665.8M321.5 679.5V676.3M323.2 679.5V673.4M324.8 679.5V674.4M325.6 679.5V674.4M334.1 679.5V665.8M335.7 679.5V673.8M344.3 679.5V662.4M342.7 679.5V676.7M345.1 679.5V672.6M354.5 679.5V659.5M353.7 679.5V670.9M355.3 679.5V670.0M359.7 679.5V665.8M357.2 679.5V676.8M358.1 679.5V672.8M358.9 679.5V674.4M360.5 679.5V675.0M361.3 679.5V675.8M367.5 679.5V667.0M370.5 679.5V648.1M371.3 679.5V665.4M378.8 679.5V672.7M379.6 679.5V676.5M389.5 679.5V673.2M387.0 679.5V678.4M390.3 679.5V676.8M391.1 679.5V678.2M401.5 679.5V673.8M399.0 679.5V677.1M400.7 679.5V677.4M402.3 679.5V677.2M403.1 679.5V676.9M412.9 679.5V673.8M413.7 679.5V678.5M424.2 679.5V674.9M421.7 679.5V678.5M422.6 679.5V677.8M423.4 679.5V678.7M425.8 679.5V677.3M434.7 679.5V663.0M433.1 679.5V674.4M445.6 679.5V677.2M447.2 679.5V678.6M459.6 679.5V674.4M457.1 679.5V678.2M461.2 679.5V678.0M470.3 679.5V664.7M468.7 679.5V674.1M471.1 679.5V674.0M471.9 679.5V673.8M484.1 679.5V669.2M481.6 679.5V675.4M483.3 679.5V677.7M492.4 679.5V673.8M489.9 679.5V677.7M491.6 679.5V677.9M493.2 679.5V677.9M507.5 679.5V622.5M508.1 679.5V668.1M505.6 679.5V676.3M507.3 679.5V675.5M509.7 679.5V676.9" stroke="#444" stroke-width="1.2" fill="none"/><path d="M312.3 740.3V719.2M309.8 740.3V736.4M310.7 740.3V736.0M311.5 740.3V734.2M314.4 740.3V736.3M312.8 740.3V739.0M313.6 740.3V739.5M315.2 740.3V739.4M318.7 740.3V738.0M319.5 740.3V739.7M327.4 740.3V726.6M328.2 740.3V735.3M329.4 740.3V729.5M327.8 740.3V736.9M328.6 740.3V735.1M332.7 740.3V684.4M340.1 740.3V732.3M337.6 740.3V736.6M342.5 740.3V729.5M340.0 740.3V736.4M340.9 740.3V738.1M341.7 740.3V735.6M343.3 740.3V738.5M346.5 740.3V726.0M344.0 740.3V735.5M344.9 740.3V736.5M347.3 740.3V736.1M348.1 740.3V735.0M353.4 740.3V734.0M350.9 740.3V738.6M352.6 740.3V738.1M355.0 740.3V739.2M359.4 740.3V730.6M356.9 740.3V736.3M358.6 740.3V737.7M360.2 740.3V737.3M361.0 740.3V736.5M370.1 740.3V731.8M371.7 740.3V738.2M375.7 740.3V723.2M374.9 740.3V732.1M386.2 740.3V724.9M383.7 740.3V737.0M384.6 740.3V737.3M385.4 740.3V732.8M387.0 740.3V737.9M387.8 740.3V737.1M389.2 740.3V731.2M387.6 740.3V738.0M388.4 740.3V735.8M390.0 740.3V738.3M390.8 740.3V738.8M400.5 740.3V733.5M398.0 740.3V737.7M398.9 740.3V739.2M399.7 740.3V738.7M402.1 740.3V738.0M414.2 740.3V733.5M412.6 740.3V736.9M413.4 740.3V738.7M415.0 740.3V739.2M415.8 740.3V738.7M426.2 740.3V737.4M425.4 740.3V739.8M427.0 740.3V739.6M427.8 740.3V739.6M444.9 740.3V734.6M443.3 740.3V739.3M459.2 740.3V731.2M456.7 740.3V736.1M460.8 740.3V738.6M476.6 740.3V730.6M474.1 740.3V735.9M477.4 740.3V736.6M489.0 740.3V735.7M506.7 740.3V683.3M507.7 740.3V727.2M505.2 740.3V734.1M506.9 740.3V733.9" stroke="#444" stroke-width="1.2" fill="none"/><path d="M312.2 801.2V785.2M314.0 801.2V787.5M347.5 801.2V790.4M420.6 801.2V790.4M459.5 801.2V791.5M481.2 801.2V744.2M482.6 801.2V790.4M506.5 801.2V789.8" stroke="#555" stroke-width="1.4" fill="none"/><path d="M312.2 861.8V831.0M325.9 861.8V835.0M335.8 861.8V845.8M337.9 861.8V844.7M358.0 861.8V857.2M368.1 861.8V852.1M402.0 861.8V854.4M422.7 861.8V853.2M482.9 861.8V804.8M483.5 861.8V851.0M508.3 861.8V859.5" stroke="#555" stroke-width="1.4" fill="none"/><path d="M345.8 922.0V899.2M355.9 922.0V865.6" stroke="#555" stroke-width="1.4" fill="none"/></g><g clip-path="url(#gc2)"><clipPath id="gc2"><rect x="517" y="498" width="206" height="408"/></clipPath><path d="M604.99 529.47L596.29 534.49M596.29 534.49L596.29 544.53M596.29 544.53L604.99 549.56M604.99 549.56L613.70 544.53M613.70 544.53L613.70 534.49M613.70 534.49L604.99 529.47M613.70 534.49L622.26 529.47M622.26 529.47L630.96 534.49M630.96 534.49L630.96 544.53M630.96 544.53L622.26 549.56M622.26 549.56L613.70 544.53M622.26 529.47L622.26 519.65M622.26 519.65L630.92 514.62M630.92 514.62L639.63 519.65M639.63 519.65L639.63 529.69M639.63 529.69L630.96 534.49M639.63 529.69L648.56 532.33M648.56 532.33L654.66 524.71M654.66 524.71L649.15 516.74M649.15 516.74L639.63 519.65M605.46 547.35L611.56 543.84M595.99 544.02L589.88 547.61M596.59 545.05L590.48 548.64M649.73 516.89L651.50 509.95M648.57 516.60L650.34 509.66" stroke="#1e3a5a" stroke-width="1.0" fill="none" stroke-linecap="round"/><path d="M639.63 519.65L641.56 510.00L639.63 509.80Z" fill="#1e3a5a"/><path d="M613.70 534.49L614.67 526.83L612.73 526.83Z" fill="#1e3a5a"/><path d="M630.96 534.49L631.93 526.83L629.99 526.83Z" fill="#1e3a5a"/><path d="M622.48 530.90L622.03 530.90M622.70 532.33L621.81 532.33M622.93 533.76L621.58 533.76M623.15 535.19L621.36 535.19M623.38 536.63L621.13 536.63" stroke="#1e3a5a" stroke-width="1.0" fill="none"/><path d="M639.85 531.08L639.40 531.08M640.08 532.47L639.18 532.47M640.30 533.86L638.95 533.86M640.53 535.25L638.73 535.25M640.75 536.64L638.50 536.64" stroke="#1e3a5a" stroke-width="1.0" fill="none"/><text x="613.70" y="527.05" font-size="6.83" text-anchor="middle" fill="#1e3a5a" font-family="Liberation Sans">H</text><text x="630.92" y="527.05" font-size="6.83" text-anchor="middle" fill="#1e3a5a" font-family="Liberation Sans">H</text><text x="622.26" y="542.19" font-size="6.83" text-anchor="middle" fill="#1e3a5a" font-family="Liberation Sans">H</text><text x="639.48" y="542.19" font-size="6.83" text-anchor="middle" fill="#1e3a5a" font-family="Liberation Sans">H</text><text x="651.61" y="509.58" font-size="7.28" text-anchor="middle" fill="#1e3a5a" font-family="Liberation Sans">O</text><text x="587.81" y="551.99" font-size="7.28" text-anchor="middle" fill="#1e3a5a" font-family="Liberation Sans">O</text><path d="M604.99 589.97L596.29 594.99M596.29 594.99L596.29 605.03M596.29 605.03L604.99 610.06M604.99 610.06L613.70 605.03M613.70 605.03L613.70 594.99M613.70 594.99L604.99 589.97M613.70 594.99L622.26 589.97M622.26 589.97L630.96 594.99M630.96 594.99L630.96 605.03M630.96 605.03L622.26 610.06M622.26 610.06L613.70 605.03M622.26 589.97L622.26 580.15M622.26 580.15L630.92 575.12M630.92 575.12L639.63 580.15M639.63 580.15L639.63 590.19M639.63 590.19L630.96 594.99M639.63 590.19L648.56 592.83M648.56 592.83L654.66 585.21M654.66 585.21L649.15 577.24M649.15 577.24L639.63 580.15M605.46 607.85L611.56 604.34M595.99 604.52L589.88 608.11M596.59 605.55L590.48 609.14M649.73 577.39L651.50 570.45M648.57 577.10L650.34 570.16" stroke="#333" stroke-width="1.0" fill="none" stroke-linecap="round"/><path d="M639.63 580.15L640.59 570.40" stroke="#333" stroke-width="1.0" fill="none"/><text x="651.61" y="569.74" font-size="6.27" text-anchor="middle" fill="#333" font-family="Liberation Sans">O</text><text x="587.81" y="612.15" font-size="6.27" text-anchor="middle" fill="#333" font-family="Liberation Sans">O</text><path d="M604.99 650.97L596.29 655.99M596.29 655.99L596.29 666.03M596.29 666.03L604.99 671.06M604.99 671.06L613.70 666.03M613.70 666.03L613.70 655.99M613.70 655.99L604.99 650.97M613.70 655.99L622.26 650.97M622.26 650.97L630.96 655.99M630.96 655.99L630.96 666.03M630.96 666.03L622.26 671.06M622.26 671.06L613.70 666.03M622.26 650.97L622.26 641.15M622.26 641.15L630.92 636.12M630.92 636.12L639.63 641.15M639.63 641.15L639.63 651.19M639.63 651.19L630.96 655.99M639.63 651.19L648.56 653.83M648.56 653.83L654.66 646.21M654.66 646.21L649.15 638.24M649.15 638.24L639.63 641.15M605.46 668.85L611.56 665.34M595.99 665.52L589.88 669.11M596.59 666.55L590.48 670.14M649.73 638.39L651.50 631.45M648.57 638.10L650.34 631.16" stroke="#333" stroke-width="1.0" fill="none" stroke-linecap="round"/><path d="M639.63 641.15L640.59 631.40" stroke="#333" stroke-width="1.0" fill="none"/><text x="651.61" y="630.74" font-size="6.27" text-anchor="middle" fill="#333" font-family="Liberation Sans">O</text><text x="587.81" y="673.15" font-size="6.27" text-anchor="middle" fill="#333" font-family="Liberation Sans">O</text><path d="M604.99 710.77L596.29 715.79M596.29 715.79L596.29 725.83M596.29 725.83L604.99 730.86M604.99 730.86L613.70 725.83M613.70 725.83L613.70 715.79M613.70 715.79L604.99 710.77M613.70 715.79L622.26 710.77M622.26 710.77L630.96 715.79M630.96 715.79L630.96 725.83M630.96 725.83L622.26 730.86M622.26 730.86L613.70 725.83M622.26 710.77L622.26 700.95M622.26 700.95L630.92 695.92M630.92 695.92L639.63 700.95M639.63 700.95L639.63 710.99M639.63 710.99L630.96 715.79M639.63 710.99L648.56 713.63M648.56 713.63L654.66 706.01M654.66 706.01L649.15 698.04M649.15 698.04L639.63 700.95M605.46 728.65L611.56 725.14M595.99 725.32L589.88 728.91M596.59 726.35L590.48 729.94M649.73 698.19L651.50 691.25M648.57 697.90L650.34 690.96" stroke="#333" stroke-width="1.0" fill="none" stroke-linecap="round"/><path d="M639.63 700.95L640.59 691.20" stroke="#333" stroke-width="1.0" fill="none"/><text x="651.61" y="690.54" font-size="6.27" text-anchor="middle" fill="#333" font-family="Liberation Sans">O</text><text x="587.81" y="732.95" font-size="6.27" text-anchor="middle" fill="#333" font-family="Liberation Sans">O</text><path d="M621.1 769.7L629.0 774.1L629.0 782.8L621.1 787.2L614.1 782.8L614.1 774.1ZM629.0 782.8L636.0 786.3M614.1 774.1L609.3 770.0M614.1 782.8L607.5 785.8L607.2 792.1M621.1 769.7L621.1 764.5M615.0 764.5L619.4 759.2L626.4 764.5L633.4 759.2L633.4 749.6L625.5 746.1L618.5 749.6L619.4 759.2M618.5 749.6L615.0 764.5M625.5 746.1L626.4 755.7L633.4 759.2M621.1 764.5L626.4 764.5M615.9 774.9L615.9 781.9M627.8 774.9L627.8 781.9" stroke="#444" stroke-width="1" fill="none"/><circle cx="607.2" cy="769.7" r="1.8" stroke="#444" stroke-width="0.9" fill="none"/><circle cx="606.8" cy="793.3" r="1.8" stroke="#444" stroke-width="0.9" fill="none"/><path d="M594.9 822.1L603.7 816.9L612.4 822.1L612.4 831.7L603.7 836.9L594.9 831.7ZM596.3 823.0L596.3 830.8M603.7 818.3L611.0 822.6M603.7 835.5L611.0 831.2M612.4 822.1L618.5 818.1M623.8 818.1L629.9 821.2L629.9 832.6L622.0 836.9L612.4 831.7M622.0 836.9L622.0 847.4L627.2 851.4M629.9 821.2L629.9 811.6L639.5 807.2L648.2 811.6L648.2 821.2L639.5 825.6L629.9 821.2M632.5 812.5L640.3 813.4L648.2 821.2M639.5 825.6L634.2 836.1M639.5 825.6L644.7 836.1" stroke="#444" stroke-width="1" fill="none"/><circle cx="621.1" cy="816.5" r="2" stroke="#444" stroke-width="0.9" fill="none"/><circle cx="629.9" cy="852.1" r="2" stroke="#444" stroke-width="0.9" fill="none"/><path d="M642.1 878.0L653.4 872.2L664.8 878.0L664.8 891.1L653.4 897.2L642.1 891.1ZM664.8 878.0L672.7 873.6M663.4 876.6L671.3 872.2M664.8 891.1L675.3 898.1M653.4 897.2L653.4 907.7M655.2 893.7L663.9 889.3M563.5 907.7L563.5 898.1L574.8 892.0L586.2 898.1L586.2 907.7M565.2 899.3L574.8 893.7M584.5 899.3L584.5 905.9" stroke="#444" stroke-width="1" fill="none"/><circle cx="675.3" cy="872.2" r="2.2" stroke="#444" stroke-width="0.9" fill="none"/></g></svg>
<div class="a" style="left:1176px;top:479px;width:18px;height:443px;background:#e8e8e8"></div>
<svg class="a" style="left:1176px;top:479px" width="18" height="443"><path d="M5 13L9 9L13 13" stroke="#555" stroke-width="1.6" fill="none"/><path d="M5 415L9 419L13 415" stroke="#555" stroke-width="1.6" fill="none"/><rect x="1.5" y="184" width="15" height="19" fill="#c4c4c4"/></svg>
<div class="a" style="left:10px;top:906px;width:1166px;height:16px;background:#e8e8e8"></div>
<div class="a" style="left:28px;top:906px;width:1130px;height:16px;background:#b2b2b2"></div>
<svg class="a" style="left:10px;top:906px" width="1166" height="16"><path d="M10.5 4L6.5 8L10.5 12" stroke="#555" stroke-width="1.6" fill="none"/><path d="M1155 4L1159 8L1155 12" stroke="#555" stroke-width="1.6" fill="none"/></svg>
<div class="a" style="left:6px;top:927px;width:1191px;height:22px;background:#dcdcf2"></div>
<div class="a" style="left:23px;top:928px;width:145px;height:20px;background:linear-gradient(#a6cdee,#c8eef9);clip-path:polygon(0 0,100% 0,100% 100%,19px 100%);border-radius:0 0 2px 0"></div>
<div class="t" style="left:49px;top:932px;font-size:10.6px;color:#1e2a36">SDBX DB: WMS3X</div>
<div class="t" style="left:152px;top:930px;font-size:13px;color:#111;font-weight:bold">&#x2715;</div>
<div class="a" style="left:6px;top:949px;width:1793px;height:24px;background:linear-gradient(#eceef9,#d5d7e6 50%,#9c9fb4)"></div>
<div class="a" style="left:6px;top:949px;width:285px;height:24px;background:linear-gradient(#eef0f9,#d2d4e2 55%,#9b9eb2);border-radius:3px"></div>
<div class="a" style="left:59px;top:951px;width:43px;height:19px;background:#fff"></div>
<div class="t" style="left:61px;top:955px;font-size:11.6px;color:#222">324774</div>
<div class="t" style="left:205px;top:955px;font-size:10.8px;color:#2a2a30">725560 Records</div>
<svg class="a" style="left:0;top:949px" width="300" height="24"><path d="M14 6V18" stroke="#111" stroke-width="2"/><path d="M22 6L15.5 12L22 18Z" fill="#111"/><path d="M43 6L37 12L43 18Z" fill="#111"/><path d="M117 6L123 12L117 18Z" fill="#111"/><path d="M137 6L143.5 12L137 18Z" fill="#111"/><path d="M145 6V18" stroke="#111" stroke-width="2"/><path d="M156 7L162 12L156 17Z" fill="#aaa"/><path d="M163 12H169M166 9V15" stroke="#aaa" stroke-width="1.5"/><path d="M178 7L184 12L178 17Z" fill="#aaa"/><path d="M185 8L191 16M191 8L185 16" stroke="#aaa" stroke-width="1.2"/><path d="M54.5 4V20M106.5 4V20M200.5 4V20M290.5 4V20" stroke="#b8bac8" stroke-width="1"/></svg>
<div class="t" style="left:1462px;top:955px;font-size:11px;color:#2a2a30">&#169; 2020 John Wiley&#160; Sons, Inc. All Rights Reserved.&#160; (27.338, -0.121)</div>
<div class="a" style="left:1201px;top:72px;width:598px;height:877px;background:#a9abb6"></div>
<div class="a" style="left:1201px;top:72px;width:598px;height:22px;background:linear-gradient(#a6b1c0,#b3c3d8 70%,#bccde2)"></div>
<div class="a" style="left:1201px;top:93px;width:598px;height:1px;background:#8e96a6"></div>
<div class="t" style="left:1204px;top:77px;font-size:11.5px;color:#222">Structure/Properties</div>
<svg class="a" style="left:1750px;top:74px" width="50" height="18"><path d="M8 7H17L12.5 12Z" fill="#111"/><path d="M25 5H31M26.5 5V11M29.5 5V11M24 11H32M28 11V15" stroke="#111" stroke-width="1.6" fill="none"/><path d="M37.5 5L45.5 13M45.5 5L37.5 13" stroke="#111" stroke-width="1.8"/></svg>
<div class="a" style="left:1202px;top:94px;width:596px;height:359px;background:#fff"></div>
<svg class="a" style="left:0;top:0" width="1801" height="460"><path d="M1460.20 277.60L1436.80 291.10M1436.80 291.10L1436.80 318.10M1436.80 318.10L1460.20 331.60M1460.20 331.60L1483.60 318.10M1483.60 318.10L1483.60 291.10M1483.60 291.10L1460.20 277.60M1483.60 291.10L1506.60 277.60M1506.60 277.60L1530.00 291.10M1530.00 291.10L1530.00 318.10M1530.00 318.10L1506.60 331.60M1506.60 331.60L1483.60 318.10M1506.60 277.60L1506.60 251.20M1506.60 251.20L1529.90 237.70M1529.90 237.70L1553.30 251.20M1553.30 251.20L1553.30 278.20M1553.30 278.20L1530.00 291.10M1553.30 278.20L1577.30 285.30M1577.30 285.30L1593.70 264.80M1593.70 264.80L1578.90 243.40M1578.90 243.40L1553.30 251.20M1461.46 325.68L1477.84 316.23M1435.99 316.72L1419.57 326.37M1437.61 319.48L1421.19 329.13M1580.45 243.80L1585.20 225.15M1577.35 243.00L1582.10 224.36" stroke="#3a3a3a" stroke-width="1.45" fill="none" stroke-linecap="round"/><path d="M1553.30 251.20L1558.49 225.26L1553.31 224.74Z" fill="#3a3a3a"/><path d="M1483.60 291.10L1486.20 270.50L1481.00 270.50Z" fill="#3a3a3a"/><path d="M1530.00 291.10L1532.60 270.50L1527.40 270.50Z" fill="#3a3a3a"/><path d="M1507.20 281.45L1506.00 281.45M1507.81 285.30L1505.39 285.30M1508.41 289.15L1504.79 289.15M1509.02 293.00L1504.18 293.00M1509.62 296.85L1503.58 296.85" stroke="#3a3a3a" stroke-width="1.45" fill="none"/><path d="M1553.90 281.94L1552.70 281.94M1554.51 285.67L1552.09 285.67M1555.11 289.41L1551.49 289.41M1555.72 293.14L1550.88 293.14M1556.32 296.88L1550.28 296.88" stroke="#3a3a3a" stroke-width="1.45" fill="none"/><text x="1483.60" y="270.02" font-size="15.23" text-anchor="middle" fill="#3a3a3a" font-family="Liberation Sans">H</text><text x="1529.90" y="270.02" font-size="15.23" text-anchor="middle" fill="#3a3a3a" font-family="Liberation Sans">H</text><text x="1506.60" y="310.72" font-size="15.23" text-anchor="middle" fill="#3a3a3a" font-family="Liberation Sans">H</text><text x="1552.90" y="310.72" font-size="15.23" text-anchor="middle" fill="#3a3a3a" font-family="Liberation Sans">H</text><text x="1585.50" y="223.01" font-size="16.24" text-anchor="middle" fill="#3a3a3a" font-family="Liberation Sans">O</text><text x="1414.00" y="337.01" font-size="16.24" text-anchor="middle" fill="#3a3a3a" font-family="Liberation Sans">O</text></svg>
<div class="a" style="left:1202px;top:456px;width:596px;height:25px;background:#ececec"></div>
<div class="a" style="left:1204px;top:457px;width:79px;height:24px;background:#fff;border-right:1px solid #d0d0d0"></div>
<div class="t" style="left:1204px;top:463px;font-size:11.6px;color:#222;width:79px;text-align:center">All Properties</div>
<div class="a" style="left:1283px;top:459px;width:73px;height:22px;background:#e1e1e1;border-right:1px solid #d0d0d0"></div>
<div class="t" style="left:1283px;top:464px;font-size:11.6px;color:#222;width:73px;text-align:center">Attachments</div>
<div class="a" style="left:1357px;top:459px;width:112px;height:22px;background:#e1e1e1;border-right:1px solid #d0d0d0"></div>
<div class="t" style="left:1357px;top:464px;font-size:11.6px;color:#222;width:112px;text-align:center">Preferred Properties</div>
<div class="a" style="left:1470px;top:459px;width:61px;height:22px;background:#e1e1e1;border-right:1px solid #d0d0d0"></div>
<div class="t" style="left:1470px;top:464px;font-size:11.6px;color:#222;width:61px;text-align:center">Substructs</div>
<div class="a" style="left:1532px;top:459px;width:84px;height:22px;background:#e1e1e1;border-right:1px solid #d0d0d0"></div>
<div class="t" style="left:1532px;top:464px;font-size:11.6px;color:#222;width:84px;text-align:center">Sel. Substructs</div>
<div class="a" style="left:1617px;top:459px;width:102px;height:22px;background:#e1e1e1;border-right:1px solid #d0d0d0"></div>
<div class="t" style="left:1617px;top:464px;font-size:11.6px;color:#222;width:102px;text-align:center">Original Data Files</div>
<div class="a" style="left:1202px;top:481px;width:596px;height:438px;background:#fff"></div>
<div class="a" style="left:1203px;top:481px;width:594px;height:18px;background:#a6a6a6"></div>
<div class="t" style="left:1203px;top:484px;width:266px;font-size:11.6px;color:#2a2a2a;text-align:center">Name</div>
<div class="t" style="left:1470px;top:484px;width:327px;font-size:11.6px;color:#2a2a2a;text-align:center">Value</div>
<div class="t" style="left:1205px;top:503.0px;font-size:11.8px;color:#222">Name</div>
<div class="t" style="left:1473px;top:503.0px;font-size:11.8px;color:#222">19-Nor-4-androstenedione</div>
<div class="a" style="left:1203px;top:521.2px;width:594px;height:1px;background:#d4d4d4"></div>
<div class="t" style="left:1205px;top:525.7px;font-size:11.8px;color:#222">Classification</div>
<div class="t" style="left:1473px;top:525.7px;font-size:11.8px;color:#222">Estrogens and derivatives</div>
<div class="a" style="left:1203px;top:543.9px;width:594px;height:1px;background:#d4d4d4"></div>
<div class="t" style="left:1205px;top:548.4px;font-size:11.8px;color:#222">Estimated Kovats Retention Index</div>
<div class="t" style="left:1473px;top:548.4px;font-size:11.8px;color:#222">2049</div>
<div class="a" style="left:1203px;top:566.6px;width:594px;height:1px;background:#d4d4d4"></div>
<div class="t" style="left:1205px;top:571.1px;font-size:11.8px;color:#222">Exact Mass</div>
<div class="t" style="left:1473px;top:571.1px;font-size:11.8px;color:#222">272.17763 u</div>
<div class="a" style="left:1203px;top:589.3px;width:594px;height:1px;background:#d4d4d4"></div>
<div class="t" style="left:1205px;top:593.8px;font-size:11.8px;color:#222">Formula</div>
<div class="t" style="left:1473px;top:593.8px;font-size:11.8px;color:#222">C18H24O2</div>
<div class="a" style="left:1203px;top:612.0px;width:594px;height:1px;background:#d4d4d4"></div>
<div class="t" style="left:1205px;top:616.5px;font-size:11.8px;color:#222">InChI</div>
<div class="t" style="left:1473px;top:616.5px;font-size:11.85px;color:#222">InChI=1S/C18H24O2/c1-18-9-8-14-13-5-3-12(19)10-11(13)...</div>
<div class="a" style="left:1203px;top:634.7px;width:594px;height:1px;background:#d4d4d4"></div>
<div class="t" style="left:1205px;top:639.2px;font-size:11.8px;color:#222">InChIKey</div>
<div class="t" style="left:1473px;top:639.2px;font-size:11.8px;color:#222">JRIZOGLBRPZBLQ-QXUSFIETSA-N</div>
<div class="a" style="left:1203px;top:657.4px;width:594px;height:1px;background:#d4d4d4"></div>
<div class="t" style="left:1205px;top:661.9px;font-size:11.8px;color:#222">Molecular Weight</div>
<div class="t" style="left:1473px;top:661.9px;font-size:11.8px;color:#222">272.382 g/mol</div>
<div class="a" style="left:1203px;top:680.1px;width:594px;height:1px;background:#d4d4d4"></div>
<div class="t" style="left:1205px;top:684.6px;font-size:11.8px;color:#222">Nominal Mass</div>
<div class="t" style="left:1473px;top:684.6px;font-size:11.8px;color:#222">272 g</div>
<div class="a" style="left:1203px;top:702.8px;width:594px;height:1px;background:#d4d4d4"></div>
<div class="t" style="left:1205px;top:707.3px;font-size:11.8px;color:#222">Quality</div>
<div class="t" style="left:1473px;top:707.3px;font-size:11.8px;color:#222">1000</div>
<div class="a" style="left:1203px;top:725.5px;width:594px;height:1px;background:#d4d4d4"></div>
<div class="t" style="left:1205px;top:730.0px;font-size:11.8px;color:#222">Source of Spectrum</div>
<div class="t" style="left:1473px;top:730.0px;font-size:11.8px;color:#222">SWG-33-2119-0</div>
<div class="a" style="left:1203px;top:748.2px;width:594px;height:1px;background:#d4d4d4"></div>
<div class="t" style="left:1205px;top:752.7px;font-size:11.8px;color:#222">Synonyms</div>
<div class="t" style="left:1473px;top:752.7px;font-size:11.8px;color:#222">Estr-4-en-3,17-dione</div>
<div class="t" style="left:1473px;top:769.4px;font-size:11.3px;color:#222">(8R,9S,10R,13S,14S)-13-methyl-1,6,7,8,9,10,11,12,13,14,15,...</div>
<div class="a" style="left:1203px;top:787.9px;width:594px;height:1px;background:#d4d4d4"></div>
<div class="t" style="left:1205px;top:792.4px;font-size:11.8px;color:#222">Wiley ID</div>
<div class="t" style="left:1473px;top:792.4px;font-size:11.8px;color:#222">1809537</div>
<div class="a" style="left:1203px;top:810.6px;width:594px;height:1px;background:#d4d4d4"></div>
<div class="a" style="left:1469px;top:481px;width:1px;height:329px;background:#d4d4d4"></div>
<div class="a" style="left:1203px;top:919px;width:595px;height:29px;background:#b1b1b1"></div>
<div class="a" style="left:1401px;top:919px;width:1px;height:29px;background:#d8d8d8"></div>
<div class="a" style="left:1600px;top:919px;width:1px;height:29px;background:#d8d8d8"></div>
<div class="t" style="left:1203px;top:928px;width:198px;text-align:center;font-size:11.6px;color:#8a8a8a">Add...</div>
<div class="t" style="left:1402px;top:928px;width:198px;text-align:center;font-size:11.6px;color:#8a8a8a">Edit...</div>
<div class="t" style="left:1601px;top:928px;width:197px;text-align:center;font-size:11.6px;color:#8a8a8a">Delete</div>
<svg class="a" style="left:0;top:0" width="1120" height="74"><path d="M8.5 27 h1.2M8.5 30 h1.2M8.5 33 h1.2M8.5 36 h1.2M8.5 39 h1.2M8.5 42 h1.2" stroke="#8a8c9c" stroke-width="1.2"/><path d="M8.5 52 h1.2M8.5 55 h1.2M8.5 58 h1.2M8.5 61 h1.2M8.5 64 h1.2M8.5 67 h1.2" stroke="#8a8c9c" stroke-width="1.2"/><path d="M81.0 28V44" stroke="#b4b6c6" stroke-width="1"/><path d="M82.0 28V44" stroke="#fafafe" stroke-width="1"/><path d="M130.5 28V44" stroke="#b4b6c6" stroke-width="1"/><path d="M131.5 28V44" stroke="#fafafe" stroke-width="1"/><path d="M202.0 28V44" stroke="#b4b6c6" stroke-width="1"/><path d="M203.0 28V44" stroke="#fafafe" stroke-width="1"/><path d="M229.5 28V44" stroke="#b4b6c6" stroke-width="1"/><path d="M230.5 28V44" stroke="#fafafe" stroke-width="1"/><path d="M278.5 28V44" stroke="#b4b6c6" stroke-width="1"/><path d="M279.5 28V44" stroke="#fafafe" stroke-width="1"/><path d="M590.5 28V44" stroke="#b4b6c6" stroke-width="1"/><path d="M591.5 28V44" stroke="#fafafe" stroke-width="1"/><path d="M425.0 52V69" stroke="#b4b6c6" stroke-width="1"/><path d="M426.0 52V69" stroke="#fafafe" stroke-width="1"/><path d="M519.5 52V69" stroke="#b4b6c6" stroke-width="1"/><path d="M520.5 52V69" stroke="#fafafe" stroke-width="1"/><path d="M590.5 52V69" stroke="#b4b6c6" stroke-width="1"/><path d="M591.5 52V69" stroke="#fafafe" stroke-width="1"/><path d="M683.0 52V69" stroke="#b4b6c6" stroke-width="1"/><path d="M684.0 52V69" stroke="#fafafe" stroke-width="1"/><path d="M799.5 52V69" stroke="#b4b6c6" stroke-width="1"/><path d="M800.5 52V69" stroke="#fafafe" stroke-width="1"/><path d="M936.5 52V69" stroke="#b4b6c6" stroke-width="1"/><path d="M937.5 52V69" stroke="#fafafe" stroke-width="1"/><path d="M1008.0 52V69" stroke="#b4b6c6" stroke-width="1"/><path d="M1009.0 52V69" stroke="#fafafe" stroke-width="1"/><path d="M1035.0 52V69" stroke="#b4b6c6" stroke-width="1"/><path d="M1036.0 52V69" stroke="#fafafe" stroke-width="1"/><path d="M1084.0 52V69" stroke="#b4b6c6" stroke-width="1"/><path d="M1085.0 52V69" stroke="#fafafe" stroke-width="1"/><path d="M18.5 28.5H25L28.5 32V41.5H18.5Z" fill="#fff" stroke="#222" stroke-width="1.2"/><path d="M25 28.5V32H28.5" fill="none" stroke="#222" stroke-width="1"/><path d="M38.5 31.5H43L44.5 33H50V41H38.5Z" fill="#a0a830" stroke="#222" stroke-width="1"/><path d="M41 35H53L50 41H38.5Z" fill="#7a8a10" stroke="#222" stroke-width="1"/><path d="M46 31Q49 27 52 30" stroke="#222" stroke-width="1.4" fill="none"/><path d="M51 28L53 31L50 31Z" fill="#222"/><rect x="64" y="28" width="10.5" height="8" fill="#8c8c8c"/><rect x="59" y="33" width="9" height="10" fill="#9a9a9a"/><rect x="87" y="29" width="9" height="7" fill="#8e8e8e"/><rect x="95" y="33" width="6" height="10" fill="#a8a8a8"/><path d="M94 37h7M94 40h7" stroke="#ddd" stroke-width="1"/><rect x="109" y="29" width="9" height="7" fill="#8e8e8e"/><rect x="117" y="33" width="6" height="10" fill="#a8a8a8"/><path d="M116 37h7M116 40h7" stroke="#ddd" stroke-width="1"/><rect x="136" y="28.5" width="8" height="10" fill="#777" stroke="#333" stroke-width="1"/><path d="M138 31h5M138 33.5h5M138 36h5" stroke="#ddd" stroke-width="0.8"/><rect x="143" y="33" width="7.5" height="8.5" fill="#8a8ab0" stroke="#33338a" stroke-width="1.2"/><rect x="158" y="28.5" width="8" height="10" fill="#777" stroke="#333" stroke-width="1"/><path d="M160 31h5M160 33.5h5M160 36h5" stroke="#ddd" stroke-width="0.8"/><rect x="165" y="33" width="7.5" height="8.5" fill="#8a8ab0" stroke="#33338a" stroke-width="1.2"/><rect x="180" y="28.5" width="8" height="10" fill="#777" stroke="#333" stroke-width="1"/><path d="M182 31h5M182 33.5h5M182 36h5" stroke="#ddd" stroke-width="0.8"/><rect x="187" y="33" width="7.5" height="8.5" fill="#8a8ab0" stroke="#33338a" stroke-width="1.2"/><rect x="208" y="29" width="13" height="12" rx="1.5" fill="#909090"/><rect x="214" y="35" width="8" height="7" fill="#d0d0d0" stroke="#999" stroke-width="0.8"/><path d="M236 42V34L238 29H240L241 34V42Z M243 42V34L244 29H246L248 34V42Z" fill="#888" stroke="#555" stroke-width="0.8"/><path d="M240 36H244" stroke="#555" stroke-width="1.5"/><path d="M257 28.5L257 40L260 37.5L262.5 42L264 41L261.5 36.5L265 36Z" fill="#111"/><text x="262.5" y="40.5" font-size="16" font-weight="bold" fill="#2a2a7a" font-family="Liberation Serif">?</text><rect x="308.5" y="52.5" width="15" height="15" fill="#fff" stroke="#111" stroke-width="1.3"/><path d="M312.5 52.0V68.0M316.0 52.0V68.0M308.0 56.5H324.0M308.0 60.0H324.0M308.0 63.5H324.0" stroke="#111" stroke-width="1.3"/><path d="M317 54.5h5M317 58h5M317 61.5h5M317 65h5" stroke="#6a6ab4" stroke-width="1.4"/><rect x="330.5" y="52.5" width="15" height="15" fill="#fff" stroke="#111" stroke-width="1.3"/><path d="M334.5 52.0V68.0M338.0 52.0V68.0M330.0 56.5H346.0M330.0 60.0H346.0M330.0 63.5H346.0" stroke="#111" stroke-width="1.3"/><rect x="337" y="51" width="9" height="8" fill="#8a9a20" stroke="#222" stroke-width="0.8"/><rect x="339" y="61" width="6" height="6" fill="#3a3a9a"/><rect x="352.5" y="52.5" width="15" height="15" fill="#fff" stroke="#111" stroke-width="1.3"/><path d="M356.5 52.0V68.0M360.0 52.0V68.0M352.0 56.5H368.0M352.0 60.0H368.0M352.0 63.5H368.0" stroke="#111" stroke-width="1.3"/><path d="M355 55L366 66M366 55L355 66" stroke="#d01818" stroke-width="2"/><path d="M375.5 52 v1.2M375.5 55 v1.2M375.5 58 v1.2M375.5 61 v1.2M375.5 64 v1.2M375.5 67 v1.2" stroke="#8a8c9c" stroke-width="1.2"/><path d="M385.5 52.5V65L388.5 62.5L391 67L393 66L390.5 61.5L394.5 61Z" fill="#fff" stroke="#333" stroke-width="1"/><path d="M405.5 61H418.5M412 54.5V67.5" stroke="#444" stroke-width="1.5"/><rect x="428.5" y="49.5" width="21.5" height="21.5" fill="#cfe0f6" stroke="#7ca6dc" stroke-width="1"/><rect x="686.0" y="49.5" width="21.5" height="21.5" fill="#cfe0f6" stroke="#7ca6dc" stroke-width="1"/><rect x="823.0" y="49.5" width="22.0" height="21.5" fill="#cfe0f6" stroke="#7ca6dc" stroke-width="1"/><path d="M435.0 67.0V57.0M438.0 67.0V53.0M441.0 67.0V61.0M444.0 67.0V58.0" stroke="#d83030" stroke-width="1.5"/><path d="M433.0 67.5H447.0" stroke="#222" stroke-width="1.3"/><path d="M453.5 67V54H459V67M461 67V54H467V67" fill="none" stroke="#d83030" stroke-width="1.5"/><path d="M452 67.5H469" stroke="#333" stroke-width="1.3"/><rect x="474" y="55" width="17" height="11" fill="#f2ef10"/><path d="M477 58h2M482 58h2M487 58h2M477 62h2M482 62h2M487 62h2" stroke="#222" stroke-width="1.5"/><path d="M500 67L498 60Q497 57 499 58L501 61V54Q502 52 503 54V59V52Q504 50 505 52V59V53Q506 51 507 53V60V55Q508 53 509 55V62Q509 67 505 68Z" fill="#fff" stroke="#222" stroke-width="1"/><circle cx="531" cy="59.5" r="4.5" fill="none" stroke="#a8a8a8" stroke-width="1.3"/><path d="M529 59.5h4M534 63L538 67" stroke="#a8a8a8" stroke-width="1.3"/><path d="M546 53l4 4M546 53h3M546 53v3M562 53l-4 4M562 53h-3M562 53v3M546 67l4-4M546 67h3M546 67v-3M562 67l-4-4M562 67h-3M562 67v-3" stroke="#1a9a3a" stroke-width="1.4" fill="none"/><path d="M551 58h6v5h-6zM554 55v10" stroke="#d02020" stroke-width="1.4" fill="none"/><path d="M568 66L570 54L573 66L575 58L577 66" stroke="#d02020" stroke-width="1.5" fill="none"/><rect x="575" y="59" width="7" height="7" fill="none" stroke="#d02020" stroke-width="1.3"/><path d="M567 67.5H583" stroke="#333" stroke-width="1"/><path d="M597 59.5H610" stroke="#111" stroke-width="2.2"/><path d="M596 59.5L601 55V64Z M611 59.5L606 55V64Z" fill="#111"/><path d="M617 66L620 54L623 66L626 58L629 66L632 66" stroke="#e03030" stroke-width="1.4" fill="none"/><path d="M620 52V58M626 52V57" stroke="#3050d0" stroke-width="1.3"/><path d="M639 64H656M639 60H656" stroke="#e04040" stroke-width="1.1"/><path d="M642 66V54M647 66V53M652 66V55" stroke="#3040a0" stroke-width="1.4"/><path d="M639 67H656" stroke="#c84" stroke-width="1"/><path d="M662 66H678" stroke="#e03030" stroke-width="1.4"/><path d="M667 66V55L670 55M667 62H664" stroke="#3040c0" stroke-width="1.5" fill="none"/><path d="M667 66Q669 60 672 60" stroke="#e03030" stroke-width="1.4" fill="none"/><path d="M692.0 67.0V54.0M695.0 67.0V52.0M698.0 67.0V60.0M701.0 67.0V57.0" stroke="#2a6a5a" stroke-width="1.5"/><path d="M690.0 67.5H704.0" stroke="#2a5a4a" stroke-width="1.3"/><path d="M712 66V58M715 66V54M718 66V57M721 66V60M724 66V62" stroke="#2a6a5a" stroke-width="1.5"/><path d="M710 67H727" stroke="#2a5a4a" stroke-width="1.3"/><path d="M736 66V55M741 66V55M746 66V55M733 60H749M733 66H749" stroke="#2a5a4a" stroke-width="1.5"/><rect x="755" y="52" width="16" height="17" fill="#111"/><path d="M755 69L759 55L763 63L767 55L771 69Z" fill="#20a0f0"/><path d="M756 69L759 59L763 66L767 59L770 69Z" fill="#30d040"/><path d="M757 69L759 63L763 68L767 63L769 69Z" fill="#f0e020"/><path d="M758 69L759.5 66L761 69ZM765 69L766.5 66L768 69Z" fill="#e02020"/><path d="M776 57L780 54L784 57L788 54L792 57M776 62L780 59L784 62L788 59L792 62M776 67L780 64L784 67L788 64L792 67" stroke="#3040c0" stroke-width="1.3" fill="none"/><path d="M776 59H792M776 64H792" stroke="#e03030" stroke-width="1.5"/><path d="M806 66V56M810 66V53M814 66V58M803 67H819" stroke="#555" stroke-width="1.4"/><path d="M805 55L817 66M817 55L805 66" stroke="#222" stroke-width="1.8"/><path d="M829.0 67.0V58.0M832.0 67.0V52.0M835.0 67.0V61.0M838.0 67.0V58.0" stroke="#d03030" stroke-width="1.5"/><path d="M827.0 67.5H841.0" stroke="#222" stroke-width="1.3"/><path d="M850 66V53M853 66V61M856 66V58M859 66V62M862 66V64" stroke="#d03030" stroke-width="1.5"/><path d="M848 67H864" stroke="#333" stroke-width="1.2"/><path d="M872 66V60M876 66V58M880 66V53M884 66V59" stroke="#d03030" stroke-width="1.5"/><path d="M870 67H886" stroke="#333" stroke-width="1.2"/><path d="M893 66L895 63L897 65L899 62L901 66" stroke="#b8b8b8" stroke-width="1.2" fill="none"/><path d="M904 62V54M901.5 56.5L904 54L906.5 56.5" stroke="#a8a8a8" stroke-width="1.6" fill="none"/><path d="M917 66L919 54L921 60L923 53L925 60L927 54L929 66" stroke="#a8a8a8" stroke-width="1.2" fill="none"/><path d="M944 66L946 60L948 64L951 57L953 64L955 59L957 66" stroke="#b0b0b0" stroke-width="1.3" fill="none"/><path d="M943 68H958" stroke="#fff" stroke-width="1.5"/><path d="M966 66L968 60L970 64L973 57L975 64L977 59L979 66" stroke="#b0b0b0" stroke-width="1.3" fill="none"/><path d="M965 68H980" stroke="#fff" stroke-width="1.5"/><path d="M988 66L990 60L992 64L995 57L997 64L999 59L1001 66" stroke="#b0b0b0" stroke-width="1.3" fill="none"/><path d="M987 68H1002" stroke="#fff" stroke-width="1.5"/><path d="M1015 54V68H1029" stroke="#3030a0" stroke-width="1.8" fill="none"/><path d="M1017 66L1020 62L1023 65" stroke="#5050d0" stroke-width="1.3" fill="none"/><path d="M1020 56L1023 53L1026 58L1029 57" stroke="#d03030" stroke-width="1.5" fill="none"/><path d="M1018 55h3" stroke="#222" stroke-width="1.5"/><path d="M1041 67L1043 56L1045 64L1048 58L1051 67H1057" stroke="#e02020" stroke-width="1.6" fill="none"/><path d="M1050 57H1057M1053.5 53.5V60.5" stroke="#111" stroke-width="2.2"/><path d="M1063 67L1065 56L1067 64L1070 58L1073 67H1079" stroke="#e02020" stroke-width="1.6" fill="none"/><path d="M1071 57H1078" stroke="#111" stroke-width="2.2"/><text x="1097" y="60" text-anchor="middle" font-size="8.5" font-weight="bold" fill="#a8a8a8" font-family="Liberation Sans">ATR</text><path d="M1090 65H1104" stroke="#a8a8a8" stroke-width="1.6"/><path d="M1089 65L1092 62.5V67.5ZM1105 65L1102 62.5V67.5Z" fill="#a8a8a8"/></svg>
</body></html>
